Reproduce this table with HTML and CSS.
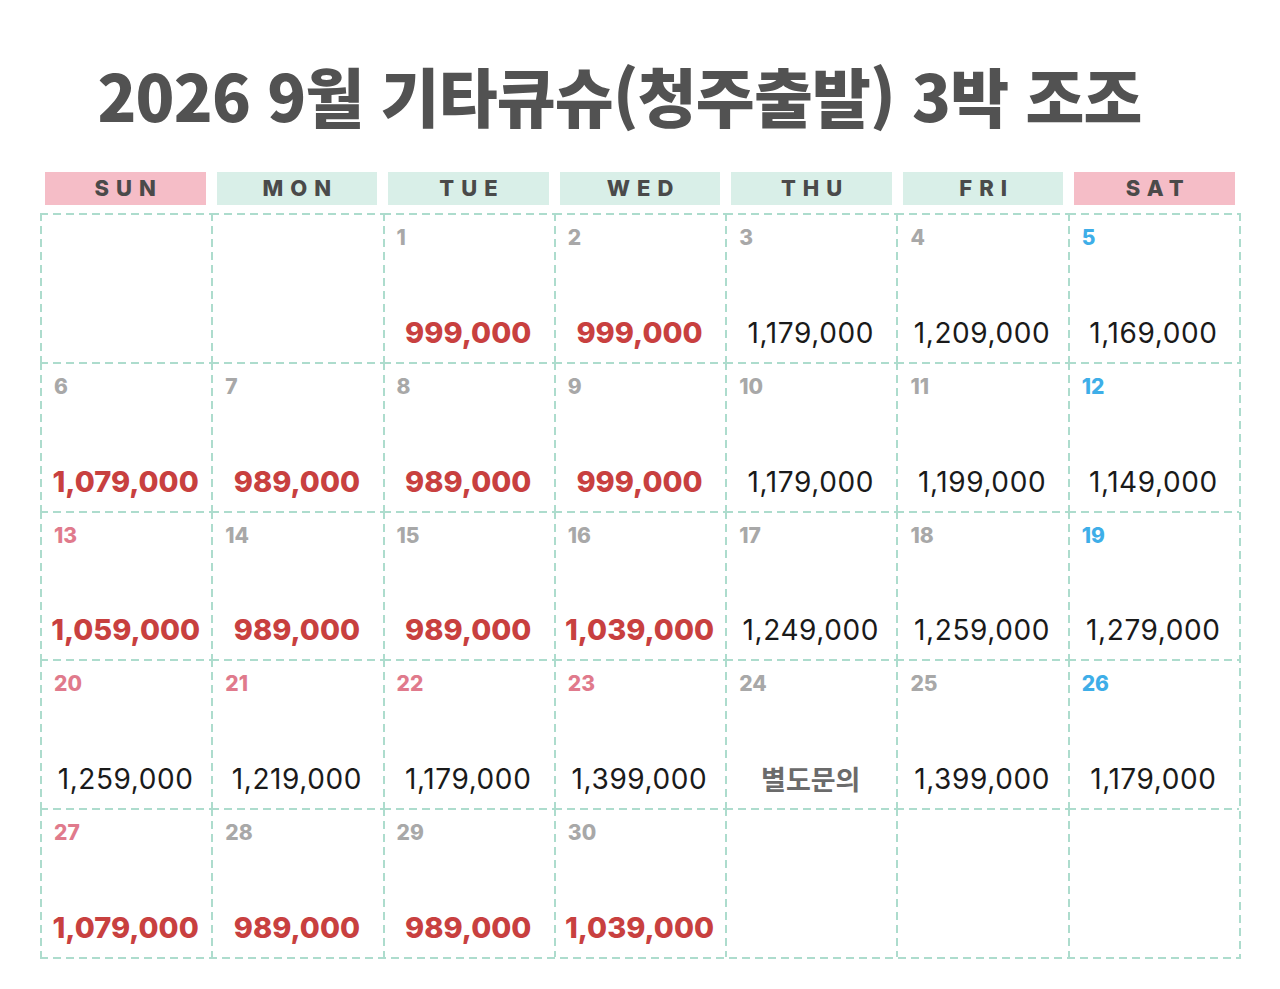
FILE: index.html
```html
<!DOCTYPE html>
<html lang="ko">
<head>
<meta charset="utf-8">
<link rel="stylesheet" href="styles.css">
</head>
<body>
<div class="page">
  <h1 class="title">2026 9월 기타큐슈(청주출발) 3박 조조</h1>
  <div class="heads">
    <div class="head weekend">SUN</div>
    <div class="head">MON</div>
    <div class="head">TUE</div>
    <div class="head">WED</div>
    <div class="head">THU</div>
    <div class="head">FRI</div>
    <div class="head weekend">SAT</div>
  </div>
  <div class="grid">
    <div class="cell"></div>
    <div class="cell"></div>
    <div class="cell"><span class="d">1</span><span class="p red">999,000</span></div>
    <div class="cell"><span class="d">2</span><span class="p red">999,000</span></div>
    <div class="cell"><span class="d">3</span><span class="p">1,179,000</span></div>
    <div class="cell"><span class="d">4</span><span class="p">1,209,000</span></div>
    <div class="cell"><span class="d blue">5</span><span class="p">1,169,000</span></div>

    <div class="cell"><span class="d">6</span><span class="p red">1,079,000</span></div>
    <div class="cell"><span class="d">7</span><span class="p red">989,000</span></div>
    <div class="cell"><span class="d">8</span><span class="p red">989,000</span></div>
    <div class="cell"><span class="d">9</span><span class="p red">999,000</span></div>
    <div class="cell"><span class="d">10</span><span class="p">1,179,000</span></div>
    <div class="cell"><span class="d">11</span><span class="p">1,199,000</span></div>
    <div class="cell"><span class="d blue">12</span><span class="p">1,149,000</span></div>

    <div class="cell"><span class="d pink">13</span><span class="p red">1,059,000</span></div>
    <div class="cell"><span class="d">14</span><span class="p red">989,000</span></div>
    <div class="cell"><span class="d">15</span><span class="p red">989,000</span></div>
    <div class="cell"><span class="d">16</span><span class="p red">1,039,000</span></div>
    <div class="cell"><span class="d">17</span><span class="p">1,249,000</span></div>
    <div class="cell"><span class="d">18</span><span class="p">1,259,000</span></div>
    <div class="cell"><span class="d blue">19</span><span class="p">1,279,000</span></div>

    <div class="cell"><span class="d pink">20</span><span class="p">1,259,000</span></div>
    <div class="cell"><span class="d pink">21</span><span class="p">1,219,000</span></div>
    <div class="cell"><span class="d pink">22</span><span class="p">1,179,000</span></div>
    <div class="cell"><span class="d pink">23</span><span class="p">1,399,000</span></div>
    <div class="cell"><span class="d">24</span><span class="p ask">별도문의</span></div>
    <div class="cell"><span class="d">25</span><span class="p">1,399,000</span></div>
    <div class="cell"><span class="d blue">26</span><span class="p">1,179,000</span></div>

    <div class="cell"><span class="d pink">27</span><span class="p red">1,079,000</span></div>
    <div class="cell"><span class="d">28</span><span class="p red">989,000</span></div>
    <div class="cell"><span class="d">29</span><span class="p red">989,000</span></div>
    <div class="cell"><span class="d">30</span><span class="p red">1,039,000</span></div>
    <div class="cell"></div>
    <div class="cell"></div>
    <div class="cell"></div>
  </div>
</div>
</body>
</html>
```

FILE: styles.css
```css
html, body {
  margin: 0;
  padding: 0;
  background: #ffffff;
}

.page {
  width: 1280px;
  height: 989px;
  box-sizing: border-box;
  padding: 0 39px 0 40px;
  font-family: Inter, "Noto Sans", "Noto Sans CJK KR", sans-serif;
}

.title {
  margin: 0;
  padding: 64px 42px 0 0;
  height: 116px;
  box-sizing: border-box;
  text-align: center;
  font-family: "Noto Sans CJK KR", "Noto Sans", sans-serif;
  font-weight: 900;
  font-size: 64px;
  line-height: 60px;
  letter-spacing: -0.8px;
  color: #525252;
  white-space: nowrap;
}

.heads {
  display: grid;
  grid-template-columns: repeat(7, 1fr);
  margin-top: 56px;
  height: 33px;
}

.head {
  margin: 0 6px 0 5px;
  background: #d9efe8;
  color: #4a4a4a;
  font-family: Inter, sans-serif;
  font-weight: 800;
  font-size: 22px;
  letter-spacing: 7px;
  text-indent: 7px;
  line-height: 33px;
  text-align: center;
}

.head.weekend {
  background: #f5bdc7;
}

.grid {
  margin-top: 8px;
  display: grid;
  grid-template-columns: repeat(7, 1fr);
  grid-template-rows: repeat(5, 148.8px);
  background-image:
    repeating-linear-gradient(to bottom, #addccd 0 8px, transparent 8px 13px),
    repeating-linear-gradient(to right, #addccd 0 8px, transparent 8px 13px);
  background-size: 2px 100%, 100% 2px;
  background-position: right top, left bottom;
  background-repeat: no-repeat;
  padding: 0 2px 2px 0;
}

.cell {
  display: flex;
  flex-direction: column;
  align-items: stretch;
  padding: 14px 6px 13px 14px;
  box-sizing: border-box;
  background-image:
    repeating-linear-gradient(to right, #addccd 0 8px, transparent 8px 13px),
    repeating-linear-gradient(to bottom, #addccd 0 8px, transparent 8px 13px);
  background-size: 100% 2px, 2px 100%;
  background-position: left top, left top;
  background-repeat: no-repeat;
}

.d {
  font-family: Inter, sans-serif;
  font-weight: 800;
  font-size: 21px;
  line-height: 22px;
  color: #a8a8a8;
}

.d.blue { color: #3eaee8; }
.d.pink { color: #e07a8c; }

.p {
  margin-top: auto;
  margin-left: -8px;
  text-align: center;
  font-family: Inter, sans-serif;
  font-weight: 400;
  font-size: 28px;
  line-height: 32px;
  color: #1a1a1a;
  letter-spacing: 0.6px;
  white-space: nowrap;
}

.p.red {
  font-weight: 800;
  font-size: 29px;
  color: #c8403f;
  letter-spacing: 0;
}

.p.ask {
  font-family: "Noto Sans CJK KR", sans-serif;
  font-weight: 700;
  font-size: 27px;
  color: #6b6b6b;
  letter-spacing: 0;
}
```
